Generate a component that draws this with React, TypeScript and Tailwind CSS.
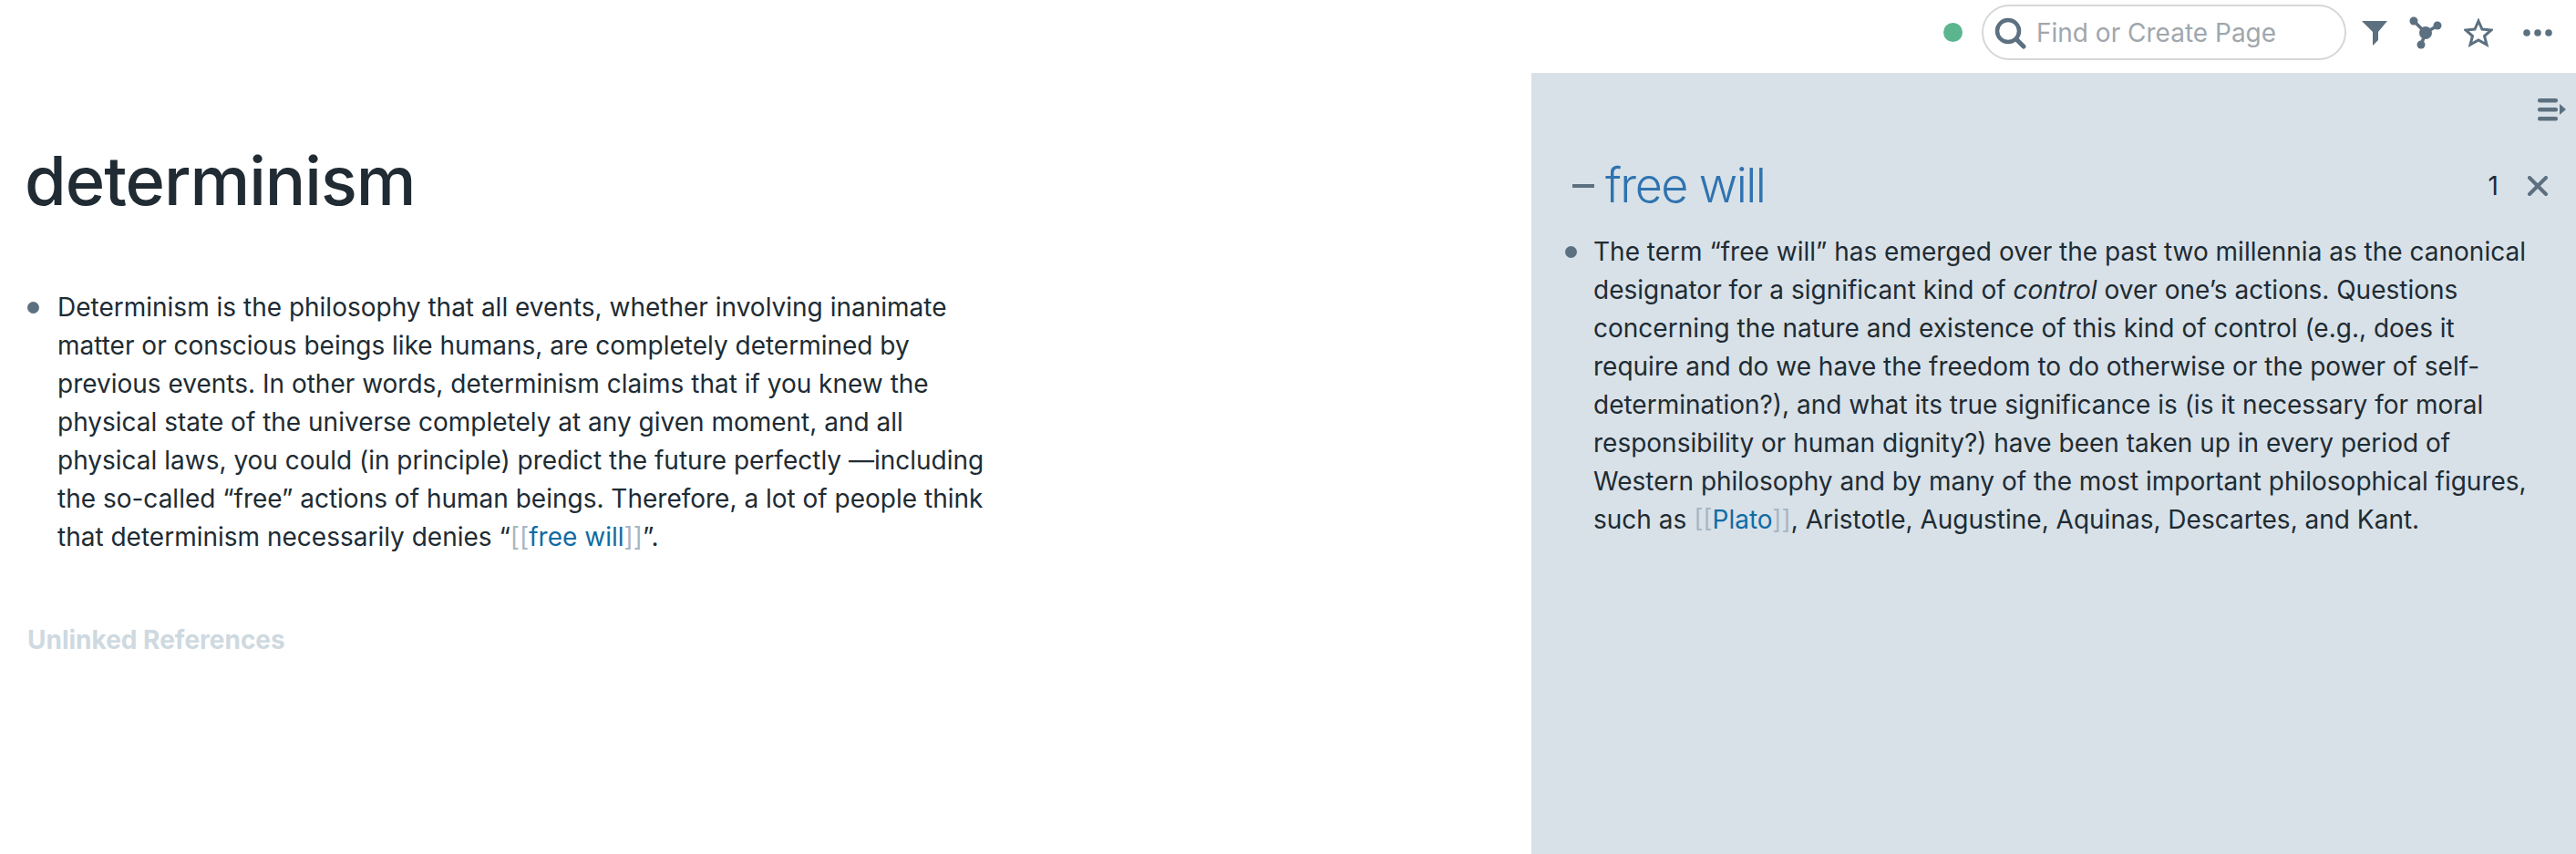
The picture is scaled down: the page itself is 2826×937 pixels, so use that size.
import type { ReactNode } from "react";

function Ref({ children }: { children: ReactNode }) {
  return (
    <span>
      <span className="text-[#a7b6c2]">[[</span>
      <span className="text-[#106ba3]">{children}</span>
      <span className="text-[#a7b6c2]">]]</span>
    </span>
  );
}

function Bullet({ children, width, dot }: { children: ReactNode; width: string; dot: string }) {
  return (
    <div className="flex items-start">
      <div className="flex h-[42px] w-[36px] shrink-0 items-center">
        <span className={`h-[13px] w-[13px] rounded-full bg-[#5c7080] ${dot}`} />
      </div>
      <div className={`text-[28px] leading-[42px] text-[#202b33] ${width}`}>
        {children}
      </div>
    </div>
  );
}

function TopBar() {
  return (
    <div className="flex h-[80px] items-center justify-end pb-[9px]">
      <span className="h-[21px] w-[21px] rounded-full bg-[#5bb58f]" />
      <div className="ml-[21px] flex h-[61px] w-[400px] items-center rounded-full border-2 border-[#d5d7d9] bg-white pl-[11px]">
        <svg width="36" height="36" viewBox="0 0 36 36" fill="none">
          <circle cx="16" cy="16" r="12" stroke="#5c7080" strokeWidth="4.5" />
          <path d="M25 25 L33 33" stroke="#5c7080" strokeWidth="5" strokeLinecap="round" />
        </svg>
        <span className="ml-[11px] text-[28px] leading-none text-[#a0a7ad]">
          Find or Create Page
        </span>
      </div>
      <svg className="ml-[16px]" width="30" height="30" viewBox="0 0 30 30">
        <path d="M1 2 H29 L19 14 V23 L13 29 V14 Z" fill="#5c7080" />
      </svg>
      <svg className="ml-[23px]" width="36" height="36" viewBox="0 0 36 36" fill="none">
        <path d="M5 5 L18 18 L31 10 M18 18 L13 31" stroke="#5c7080" strokeWidth="3.5" />
        <circle cx="5" cy="5" r="4.5" fill="#5c7080" />
        <circle cx="31" cy="10" r="4.5" fill="#5c7080" />
        <circle cx="13" cy="31" r="4.5" fill="#5c7080" />
        <circle cx="18" cy="18" r="7" fill="#5c7080" />
      </svg>
      <svg className="ml-[24px]" width="32" height="32" viewBox="0 0 32 32" fill="none">
        <path
          d="M16 3 L20 12 L30 13 L22.5 19.5 L25 29 L16 24 L7 29 L9.5 19.5 L2 13 L12 12 Z"
          stroke="#5c7080"
          strokeWidth="3"
          strokeLinejoin="miter"
        />
      </svg>
      <svg className="mr-[26px] ml-[33px]" width="32" height="8" viewBox="0 0 32 8">
        <circle cx="4" cy="4" r="3.8" fill="#5c7080" />
        <circle cx="16" cy="4" r="3.8" fill="#5c7080" />
        <circle cx="28" cy="4" r="3.8" fill="#5c7080" />
      </svg>
    </div>
  );
}

function Main() {
  return (
    <div className="w-[1680px] shrink-0">
      <h1 className="ml-[27px] mt-[71px] text-[74px] leading-[94px] font-medium tracking-[-0.014em] text-[#202b33]">
        determinism
      </h1>
      <div className="ml-[27px] mt-[71px]">
        <Bullet width="w-[1030px]" dot="ml-[3px]">
          Determinism is the philosophy that all events, whether involving inanimate matter or conscious beings like humans, are completely determined by previous events. In other words, determinism claims that if you knew the physical state of the universe completely at any given moment, and all physical laws, you could (in principle) predict the future perfectly —including the so-called “free” actions of human beings. Therefore, a lot of people think that determinism necessarily denies “<Ref>free will</Ref>”.
        </Bullet>
      </div>
      <div className="ml-[30px] mt-[71px] text-[28px] leading-[42px] font-bold text-[#ced9e0]">
        Unlinked References
      </div>
    </div>
  );
}

function SidePanel() {
  return (
    <div className="min-w-0 flex-1 bg-[#d8e1e8]">
      <div className="flex h-[54px] items-end justify-end">
        <svg className="mr-[10px]" width="32" height="28" viewBox="0 0 32 28">
          <rect x="0" y="2" width="22" height="4.5" rx="2" fill="#5c7080" />
          <rect x="0" y="12" width="22" height="4.5" rx="2" fill="#5c7080" />
          <rect x="0" y="22" width="22" height="4.5" rx="2" fill="#5c7080" />
          <path d="M24 8 L31 14 L24 20 Z" fill="#5c7080" />
        </svg>
      </div>
      <div className="mt-[37px] flex h-[66px] items-center pl-[45px]">
        <span className="h-[4px] w-[24px] bg-[#5c7080]" />
        <span className="ml-[12px] text-[52px] leading-none font-light tracking-[-0.03em] text-[#2f73b0]">
          free will
        </span>
        <span className="ml-auto text-[28px] text-[#202b33]">1</span>
        <svg className="ml-[32px] mr-[31px]" width="22" height="22" viewBox="0 0 22 22" fill="none">
          <path d="M2 2 L20 20 M20 2 L2 20" stroke="#5c7080" strokeWidth="4" strokeLinecap="round" />
        </svg>
      </div>
      <div className="mt-[18px] pl-[32px]">
        <Bullet width="w-[1040px]" dot="ml-[5px]">
          The term “free will” has emerged over the past two millennia as the canonical designator for a significant kind of <em>control</em> over one’s actions. Questions concerning the nature and existence of this kind of control (e.g., does it require and do we have the freedom to do otherwise or the power of self-determination?), and what its true significance is (is it necessary for moral responsibility or human dignity?) have been taken up in every period of Western philosophy and by many of the most important philosophical figures, such as <Ref>Plato</Ref>, Aristotle, Augustine, Aquinas, Descartes, and Kant.
        </Bullet>
      </div>
    </div>
  );
}

export default function App() {
  return (
    <div className="flex h-[937px] flex-col overflow-hidden bg-white font-['Inter',sans-serif]">
      <TopBar />
      <div className="flex min-h-0 flex-1">
        <Main />
        <SidePanel />
      </div>
    </div>
  );
}
